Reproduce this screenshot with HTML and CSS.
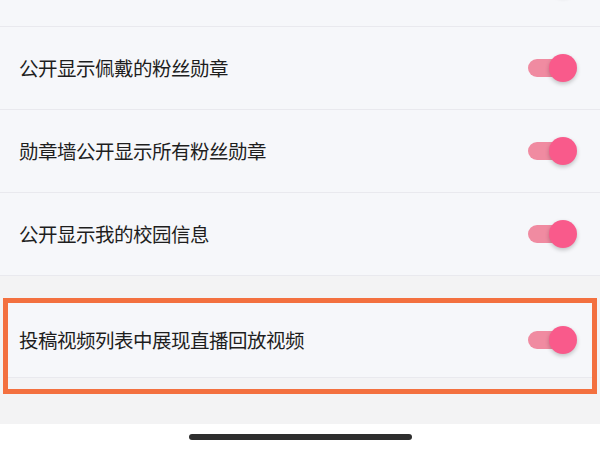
FILE: index.html
```html
<!DOCTYPE html>
<html lang="zh-CN">
<head>
<meta charset="utf-8">
<link rel="stylesheet" href="styles.css">
</head>
<body>
<div class="screen">
  <div class="list">
    <div class="row row-partial">
      <span class="label"></span>
      <span class="switch"><span class="track"></span><span class="knob"></span></span>
    </div>
    <div class="row">
      <span class="label">公开显示佩戴的粉丝勋章</span>
      <span class="switch"><span class="track"></span><span class="knob"></span></span>
    </div>
    <div class="row">
      <span class="label">勋章墙公开显示所有粉丝勋章</span>
      <span class="switch"><span class="track"></span><span class="knob"></span></span>
    </div>
    <div class="row">
      <span class="label">公开显示我的校园信息</span>
      <span class="switch"><span class="track"></span><span class="knob"></span></span>
    </div>
  </div>
  <div class="highlight">
    <div class="row row-hl">
      <span class="label">投稿视频列表中展现直播回放视频</span>
      <span class="switch"><span class="track"></span><span class="knob"></span></span>
    </div>
  </div>
  <div class="footer">
    <span class="home-indicator"></span>
  </div>
</div>
</body>
</html>
```

FILE: styles.css
```css
html, body {
  margin: 0;
  padding: 0;
  background: #f3f3f4;
}
.screen {
  width: 600px;
  height: 450px;
  overflow: hidden;
  display: flex;
  flex-direction: column;
  font-family: "Noto Sans CJK SC", "Noto Sans", sans-serif;
}
.list {
  display: flex;
  flex-direction: column;
}
.row {
  height: 82px;
  flex: none;
  box-sizing: content-box;
  display: flex;
  align-items: center;
  justify-content: space-between;
  padding: 0 23px 0 19px;
  background: #f6f7fa;
  border-bottom: 1px solid #e9e9ee;
}
.row-partial {
  margin-top: -56px;
}
.row-partial .switch {
  margin-top: -6px;
}
.row-partial .knob {
  background: #f6f7fa;
}
.row-partial .track {
  background: #f6f7fa;
}
.label {
  font-size: 19.5px;
  color: #1e1e1e;
  letter-spacing: -0.5px;
  line-height: 1;
}
.switch {
  position: relative;
  width: 49px;
  height: 28px;
  display: block;
}
.track {
  position: absolute;
  left: 0;
  top: 5px;
  width: 40px;
  height: 18px;
  border-radius: 9px;
  background: #f08ba1;
}
.knob {
  position: absolute;
  right: 0;
  top: 0;
  width: 28px;
  height: 28px;
  border-radius: 50%;
  background: #f95a8b;
  box-shadow: 0 2px 4px rgba(0, 0, 0, 0.22);
}
.highlight {
  margin: 22px 3px 0;
  border: 5px solid #f3703f;
  height: 86px;
  box-sizing: content-box;
  overflow: hidden;
  background: #f3f3f5;
}
.row-hl {
  height: 74px;
  padding: 0 15px 0 11px;
}
.footer {
  margin-top: 30px;
  flex: 1;
  background: #ffffff;
  display: flex;
  justify-content: center;
  padding-top: 10px;
}
.home-indicator {
  width: 223px;
  height: 6px;
  border-radius: 3px;
  background: #2e2e2e;
}
```
